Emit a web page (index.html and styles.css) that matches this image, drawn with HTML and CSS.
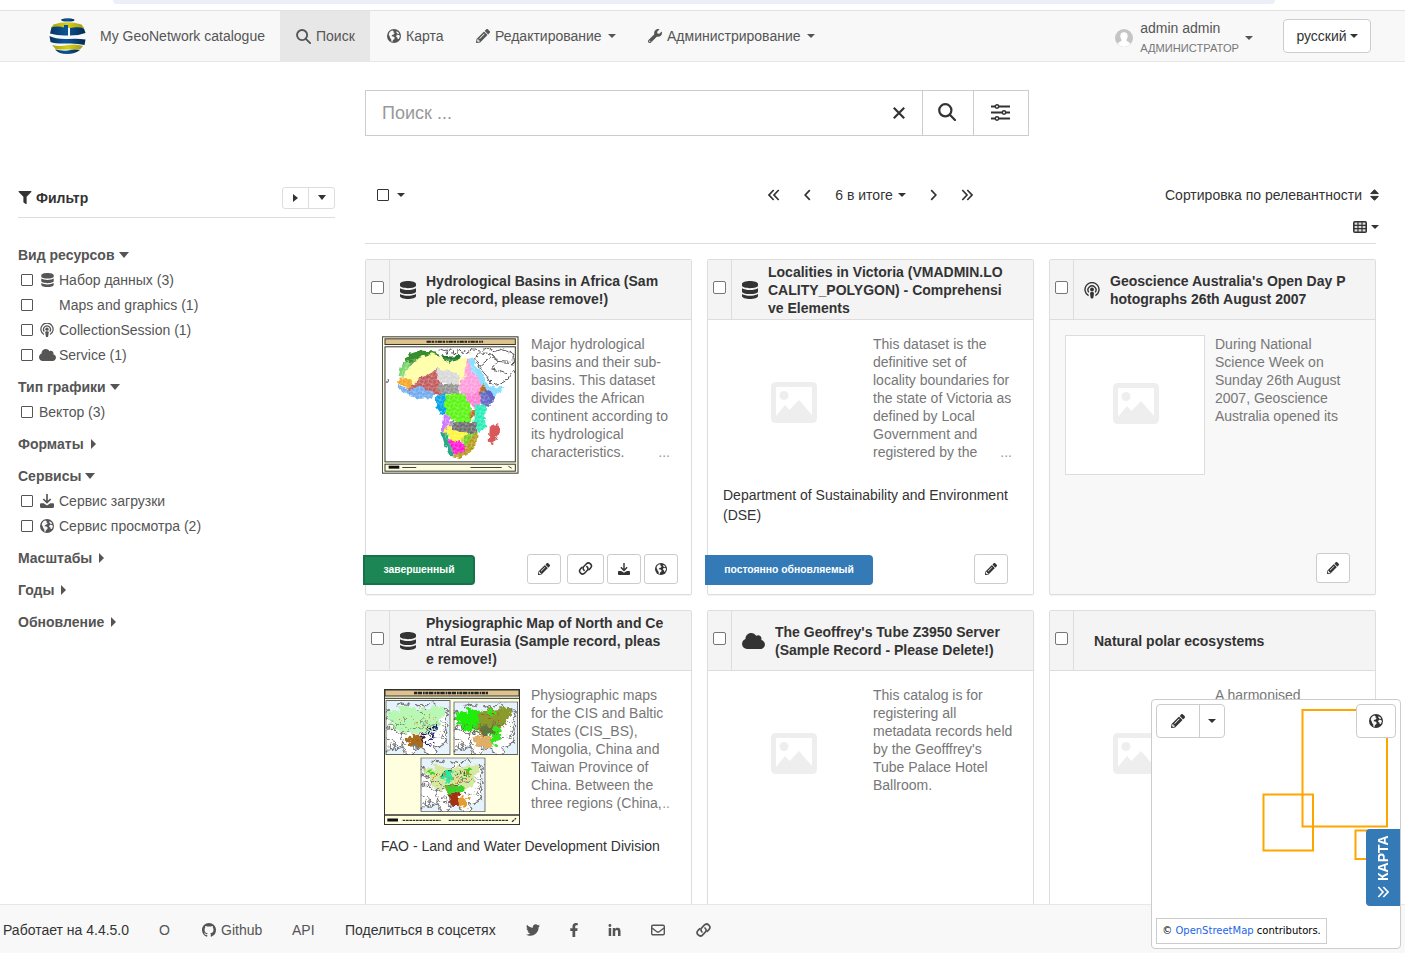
FILE: index.html
```html
<!DOCTYPE html>
<html lang="ru">
<head>
<meta charset="utf-8">
<title>My GeoNetwork catalogue</title>
<link rel="stylesheet" href="styles.css">
</head>
<body>
<svg class="sprite" aria-hidden="true">
  <symbol id="search" viewBox="0 0 16 16"><g fill="none" stroke="currentColor" stroke-width="2"><circle cx="6.5" cy="6.5" r="5.4"/><path d="M10.5 10.5l4.6 4.6" stroke-linecap="round"/></g></symbol>
  <symbol id="globe" viewBox="0 0 16 16"><circle cx="8" cy="8" r="8" fill="currentColor"/><path class="land" d="M2.600 4.400C3.400 3 4.800 2 6.300 1.700l1.300 1-.2 1.400 1.400.6-1.200 1.500-1.700.6-.7 1.400 2.200.4 1.500 1.500-.7 1.700-1.400.9-.7 2.200-1.100-.6-.2-2.700L3.600 10.200 3 8.400 2 6.600zM11 2.500l2 1.300.9 1.600-1.600.3-1-1-.8-.9zM11.300 6.600l2.900.2.500 2-1.300 2.500-1.200.2-.4-1.800-1.500-.9z"/></symbol>
  <symbol id="pencil" viewBox="0 0 512 512"><path fill="currentColor" fill-rule="evenodd" d="M497.900 142.100l-46.100 46.100c-4.700 4.700-12.300 4.700-17 0l-111-111c-4.700-4.700-4.700-12.300 0-17l46.100-46.100c18.700-18.700 49.100-18.700 67.900 0l60.100 60.100c18.800 18.700 18.800 49.100 0 67.900zM284.200 99.800L21.600 362.400.4 483.900c-2.900 16.400 11.400 30.600 27.800 27.800l121.500-21.300 262.600-262.600c4.700-4.700 4.700-12.300 0-17l-111-111c-4.800-4.700-12.400-4.700-17.100 0zM118 346l175-180 22 20-176 176zM88 424h48v36l-64 12-32-32 12-64h36z"/></symbol>
  <symbol id="wrench" viewBox="0 0 512 512"><path fill="currentColor" d="M507.730 109.100c-2.240-9.030-13.540-12.090-20.120-5.510l-74.360 74.360-67.880-11.310-11.310-67.880 74.360-74.360c6.620-6.620 3.430-17.900-5.660-20.160-47.380-11.740-99.550.91-136.580 37.930-39.640 39.640-50.550 97.100-34.050 147.200L18.740 402.760c-24.990 24.990-24.990 65.510 0 90.500 24.990 24.990 65.510 24.990 90.500 0l213.210-213.210c50.120 16.710 107.470 5.680 147.370-34.220 37.070-37.070 49.700-89.320 37.910-136.730zM64 472c-13.250 0-24-10.750-24-24 0-13.260 10.750-24 24-24s24 10.740 24 24c0 13.250-10.750 24-24 24z"/></symbol>
  <symbol id="filter" viewBox="0 0 512 512"><path fill="currentColor" d="M487.976 0H24.028C2.710 0-8.047 25.866 7.058 40.971L192 225.941V432c0 7.831 3.821 15.170 10.237 19.662l80 55.980C298.020 518.690 320 507.493 320 487.980V225.941l184.947-184.970C520.021 25.896 509.338 0 487.976 0z"/></symbol>
  <symbol id="cloud" viewBox="0 32 640 448"><path fill="currentColor" d="M537.600 226.600c4.100-10.700 6.400-22.400 6.400-34.600 0-53-43-96-96-96-19.700 0-38.100 6-53.300 16.200C367 64.200 315.300 32 256 32c-88.400 0-160 71.600-160 160 0 2.700.1 5.400.2 8.100C40.200 219.800 0 273.200 0 336c0 79.500 64.500 144 144 144h368c70.700 0 128-57.300 128-128 0-61.900-44-113.600-102.400-125.400z"/></symbol>
  <symbol id="database" viewBox="0 0 16 18"><path fill="currentColor" d="M0 3C0-.9 16-.9 16 3v1.500c0 3.500-16 3.500-16 0zM0 7.200c3.500 2.400 12.500 2.400 16 0v3.200c0 3.500-16 3.500-16 0zM0 13c3.500 2.400 12.500 2.400 16 0v2c0 3.900-16 3.900-16 0z"/></symbol>
  <symbol id="podcast" viewBox="0 0 16 16"><g fill="none" stroke="currentColor" stroke-width="1.400"><path d="M4.600 13.200a7 7 0 1 1 6.800 0"/><path d="M4.800 9.800a4 4 0 1 1 6.400 0"/></g><circle cx="8" cy="7" r="1.900" fill="currentColor"/><path fill="currentColor" d="M6 10.500c0-1.500 4-1.500 4 0l-.6 4.500c-.2 1.300-2.600 1.300-2.800 0z"/></symbol>
  <symbol id="download" viewBox="0 0 16 16"><path fill="none" stroke="currentColor" stroke-width="1.900" d="M8 0v9.500M3.800 5.700L8 9.900l4.200-4.200"/><path fill="currentColor" d="M1.200 10.500h3L8 13l3.800-2.500h3q1.200 0 1.200 1.200v3q0 1.300-1.200 1.300H1.200Q0 16 0 14.700v-3q0-1.200 1.200-1.200z"/></symbol>
  <symbol id="link" viewBox="0 0 18 16"><g fill="none" stroke="currentColor" stroke-width="1.900" stroke-linecap="round"><path d="M7.300 10.300C5.600 8.600 5.800 6.700 7 5.500l2.900-3a3.600 3.600 0 0 1 5.300 5l-2 2"/><path d="M10.700 5.700c1.700 1.700 1.500 3.600.3 4.800l-2.900 3a3.600 3.600 0 0 1-5.300-5l2-2"/></g></symbol>
  <symbol id="image" viewBox="0 0 46 41"><path fill="currentColor" fill-rule="evenodd" d="M5 0h36q5 0 5 5v31q0 5-5 5H5q-5 0-5-5V5q0-5 5-5zM5.500 5q-.5 0-.5.500V34l9-11 4.500 5L28 18l13 15V5.500q0-.5-.5-.5z"/><circle cx="13" cy="13.500" r="4.500" fill="currentColor"/></symbol>
  <symbol id="twitter" viewBox="0 0 512 512"><path fill="currentColor" d="M459.370 151.716c.325 4.548.325 9.097.325 13.645 0 138.720-105.583 298.558-298.558 298.558-59.452 0-114.680-17.219-161.137-47.106 8.447.974 16.568 1.299 25.340 1.299 49.055 0 94.213-16.568 130.274-44.832-46.132-.975-84.792-31.188-98.112-72.772 6.498.974 12.995 1.624 19.818 1.624 9.421 0 18.843-1.300 27.614-3.573-48.081-9.747-84.143-51.980-84.143-102.985v-1.299c13.969 7.797 30.214 12.670 47.431 13.319-28.264-18.843-46.781-51.005-46.781-87.391 0-19.492 5.197-37.360 14.294-52.954 51.655 63.675 129.300 105.258 216.365 109.807-1.624-7.797-2.599-15.918-2.599-24.040 0-57.828 46.782-104.934 104.934-104.934 30.213 0 57.502 12.670 76.670 33.137 23.715-4.548 46.456-13.320 66.599-25.340-7.798 24.366-24.366 44.833-46.132 57.827 21.117-2.273 41.584-8.122 60.426-16.243-14.292 20.791-32.161 39.308-52.628 54.253z"/></symbol>
  <symbol id="facebook" viewBox="0 0 320 512"><path fill="currentColor" d="M279.140 288l14.220-92.660h-88.910v-60.130c0-25.350 12.420-50.060 52.240-50.060h40.420V6.260S260.430 0 225.360 0c-73.220 0-121.080 44.380-121.080 124.720v70.620H22.890V288h81.390v224h100.170V288z"/></symbol>
  <symbol id="linkedin" viewBox="0 0 448 448"><path fill="currentColor" d="M100.280 448H7.400V148.900h92.880zM53.790 108.100C24.090 108.100 0 83.500 0 53.800a53.790 53.790 0 0 1 107.580 0c0 29.700-24.100 54.300-53.790 54.300zM447.900 448h-92.680V302.400c0-34.700-.7-79.200-48.290-79.200-48.290 0-55.690 37.700-55.690 76.700V448h-92.780V148.900h89.080v40.800h1.300c12.400-23.500 42.690-48.300 87.880-48.300 94 0 111.280 61.900 111.280 142.300V448z"/></symbol>
  <symbol id="github" viewBox="0 0 16 16"><path fill="currentColor" d="M8 0C3.580 0 0 3.580 0 8c0 3.540 2.290 6.530 5.470 7.590.4.070.55-.17.55-.38 0-.19-.01-.82-.01-1.490-2.010.37-2.530-.49-2.690-.94-.09-.23-.48-.94-.82-1.130-.28-.15-.68-.52-.01-.53.63-.01 1.080.58 1.230.82.72 1.210 1.870.87 2.330.66.070-.52.280-.87.510-1.070-1.780-.2-3.640-.89-3.640-3.950 0-.87.31-1.590.82-2.150-.08-.2-.36-1.020.08-2.120 0 0 .67-.21 2.200.82.640-.18 1.320-.27 2-.27s1.360.09 2 .27c1.530-1.040 2.200-.82 2.200-.82.440 1.100.16 1.920.08 2.120.51.560.82 1.270.82 2.150 0 3.070-1.870 3.750-3.650 3.950.29.250.54.730.54 1.480 0 1.070-.01 1.930-.01 2.200 0 .21.15.46.55.38A8.010 8.010 0 0 0 16 8c0-4.420-3.580-8-8-8z"/></symbol>
  <symbol id="mail" viewBox="0 0 14 12"><g fill="none" stroke="currentColor" stroke-width="1.400"><rect x=".7" y="1.200" width="12.600" height="9.600" rx="1.200"/><path d="M1 4l4.800 3.700q1.200.8 2.400 0L13 4"/></g></symbol>
  <symbol id="angles" viewBox="0 0 12 12"><path fill="none" stroke="currentColor" stroke-width="1.700" d="M1.300 1L6 6l-4.700 5M6.300 1L11 6l-4.700 5"/></symbol>
  <symbol id="angle" viewBox="0 0 7 12"><path fill="none" stroke="currentColor" stroke-width="1.700" d="M1.200 1.200L5.800 6l-4.600 4.800"/></symbol>
  <symbol id="sliders" viewBox="0 0 19 17"><path fill="none" stroke="currentColor" stroke-width="2" d="M0 2.500h19M0 8.500h19M0 14.500h19"/><g class="knob" stroke="currentColor" stroke-width="1.500"><circle cx="6" cy="2.500" r="1.700"/><circle cx="13" cy="8.500" r="1.700"/><circle cx="6" cy="14.500" r="1.700"/></g></symbol>
  <symbol id="times" viewBox="0 0 12 12"><path fill="none" stroke="currentColor" stroke-width="2.200" d="M.8.8l10.400 10.400M11.200.8L.8 11.200"/></symbol>
  <symbol id="table" viewBox="0 0 14 12"><rect x=".8" y=".8" width="12.400" height="10.400" rx="1" fill="#ddd" stroke="currentColor" stroke-width="1.600"/><path fill="none" stroke="currentColor" stroke-width="1.200" d="M1 4.300h12M1 7.700h12M5 1v10M9 1v10"/></symbol>
  <symbol id="sort" viewBox="0 0 9 12"><path fill="currentColor" stroke="currentColor" stroke-linejoin="round" d="M4.500.7L8.300 4.600H.7zM4.500 11.300L8.300 7.400H.7z"/></symbol>
</svg>

<div class="browser-edge"><div class="browser-bar"></div></div>
<nav class="navbar">
  <a class="brand">
    <svg class="logo" viewBox="0 0 37 36">
      <defs><linearGradient id="blue"><stop offset="0" stop-color="#08355f"/><stop offset=".45" stop-color="#0b5596"/><stop offset="1" stop-color="#062a50"/></linearGradient><linearGradient id="gold"><stop offset="0" stop-color="#a8a01a"/><stop offset=".5" stop-color="#d8cf16"/><stop offset="1" stop-color="#a39a20"/></linearGradient></defs>
      <path fill="url(#blue)" d="M12 1.500Q18.500-1 25.500 1.500L25 3Q18.500 4 13 3z"/>
      <path fill="url(#gold)" d="M4.500 6.500Q18 2 32.500 6.500L35 10H2z"/>
      <path fill="url(#blue)" d="M2.500 9.500Q8 7.500 15 9.500V7h4v10.500Q9 18 1 15.500zM21 10q8-1.500 14 .5l1.500 4.500q-7 2.500-15.500 2.500z"/>
      <path fill="url(#blue)" d="M.5 18Q7 21.500 19 21q10-.7 17.500.5l-1 5.500q-8-2-17.500-1.500Q7 26 1.500 24z"/>
      <path fill="url(#gold)" d="M3 27q8 2 16 0 9-1.500 15 1l-3 3.500H7z"/>
      <path fill="url(#blue)" d="M6 31.500q6 1.500 13 1 6-1.500 12-.5Q26 36 18 36 10 36 6 31.500z"/>
    </svg>
    <span>My GeoNetwork catalogue</span>
  </a>
  <a class="nav-item active"><svg class="i15"><use href="#search"/></svg>Поиск</a>
  <a class="nav-item map-item"><svg class="i14"><use href="#globe"/></svg>Карта</a>
  <a class="nav-item edit-item"><svg class="i14"><use href="#pencil"/></svg>Редактирование<i class="caret"></i></a>
  <a class="nav-item admin-item"><svg class="i14"><use href="#wrench"/></svg>Администрирование<i class="caret"></i></a>
  <div class="user">
    <svg class="avatar" viewBox="0 0 18 18"><circle cx="9" cy="9" r="9" fill="#c5c5c5"/><path fill="#fff" d="M9 3.200c-3 0-4 2.200-3.600 4.800.3 1.600 1 2.300 1.200 3.200-.3 1.600-3.200 1.300-4 3.800A9 9 0 0 0 9 18a9 9 0 0 0 6.400-3c-.8-2.500-3.700-2.200-4-3.800.2-.9.900-1.600 1.200-3.200C13 5.400 12 3.200 9 3.200z"/></svg>
    <div class="user-text"><div>admin admin</div><div class="role">АДМИНИСТРАТОР</div></div>
    <i class="caret"></i>
  </div>
  <button class="btn lang">русский<i class="caret"></i></button>
</nav>

<main>
  <form class="search">
    <div class="search-text">Поиск ...</div>
    <div class="clear"><svg><use href="#times"/></svg></div>
    <div class="search-go"><svg><use href="#search"/></svg></div>
    <div class="search-adv"><svg><use href="#sliders"/></svg></div>
  </form>
  <div class="content">
    <aside>
      <div class="filter-head">
        <svg class="i14"><use href="#filter"/></svg><b>Фильтр</b>
        <div class="toggle"><span><i class="tri right"></i></span><span><i class="tri down"></i></span></div>
      </div>
      <div class="facet"><h4>Вид ресурсов<i class="tri down"></i></h4>
        <label><i class="box"></i><span class="ic"><svg class="db"><use href="#database"/></svg></span>Набор данных (3)</label>
        <label><i class="box"></i><span class="ic"></span>Maps and graphics (1)</label>
        <label><i class="box"></i><span class="ic"><svg class="i14"><use href="#podcast"/></svg></span>CollectionSession (1)</label>
        <label><i class="box"></i><span class="ic"><svg class="cl"><use href="#cloud"/></svg></span>Service (1)</label>
      </div>
      <div class="facet"><h4>Тип графики<i class="tri down"></i></h4>
        <label><i class="box"></i>Вектор (3)</label></div>
      <div class="facet"><h4>Форматы<i class="tri right"></i></h4></div>
      <div class="facet"><h4>Сервисы<i class="tri down"></i></h4>
        <label><i class="box"></i><span class="ic"><svg class="i14"><use href="#download"/></svg></span>Сервис загрузки</label>
        <label><i class="box"></i><span class="ic"><svg class="i14"><use href="#globe"/></svg></span>Сервис просмотра (2)</label>
      </div>
      <div class="facet"><h4>Масштабы<i class="tri right"></i></h4></div>
      <div class="facet"><h4>Годы<i class="tri right"></i></h4></div>
      <div class="facet"><h4>Обновление<i class="tri right"></i></h4></div>
    </aside>

    <section class="results">
      <div class="toolbar">
        <div class="select"><i class="box"></i><i class="caret"></i></div>
        <div class="pager">
          <svg class="dbl flip"><use href="#angles"/></svg><svg class="sgl flip"><use href="#angle"/></svg>
          <span>6 в итоге<i class="caret"></i></span>
          <svg class="sgl"><use href="#angle"/></svg><svg class="dbl"><use href="#angles"/></svg>
        </div>
        <div class="sorting">
          <div>Сортировка по релевантности<svg class="sort"><use href="#sort"/></svg></div>
          <div class="view"><svg><use href="#table"/></svg><i class="caret"></i></div>
        </div>
      </div>

      <div class="grid">
        <article class="card">
          <header><span class="check"><i></i></span><svg class="type"><use href="#database"/></svg><h3>Hydrological Basins in Africa (Sam<br>ple record, please remove!)</h3></header>
          <div class="body">
            <div class="thumb">
              <svg class="africa" viewBox="24 20 412 412">
                <defs>
                  <pattern id="cells" width="26" height="24" patternUnits="userSpaceOnUse"><path d="M0 7l9-5 8 6 9-4M9 2l-3 12 11 5 5-10M6 14L0 19M17 19l-2 5M17 19l9 3" fill="none" stroke="#fff" stroke-opacity=".5" stroke-width="2"/></pattern>
                  <filter id="rough" x="-5%" y="-5%" width="110%" height="110%" color-interpolation-filters="sRGB"><feTurbulence type="fractalNoise" baseFrequency=".06" numOctaves="2" seed="3"/><feDisplacementMap in="SourceGraphic" scale="18" xChannelSelector="R" yChannelSelector="G"/></filter>
                </defs>
                <rect x="25" y="21" width="408" height="410" fill="#ffffdf" stroke="#333" stroke-width="3"/>
                <rect x="33" y="27" width="392" height="17" fill="#dfc38f" stroke="#333" stroke-width="3"/>
                <path d="M158 36h170" stroke="#222" stroke-width="6" stroke-dasharray="13 2 8 3 5 2"/>
                <rect x="33" y="51" width="392" height="346" fill="#fff" stroke="#333" stroke-width="3"/>
                <g filter="url(#rough)">
                  <g fill="none" stroke="#555" stroke-width="3"><path d="M196 57q10 8 22 4l4 10 8-11M240 57l-6 12 15 4 6-14 12 9 8-8M276 72l18-12 28 4 18-8 20 10 22-8 34 12M300 90l18-22 34 5 24 22 34 3M306 88l14 30 20 22 15 26 20-5 25-12 17-30 10 12M318 110l35-30 20 14-17 22 44 16M410 60l8 20 2 30M36 150l8 2-2 8-6 2"/></g>
                  <path fill="#388e2e" d="M76 138l6-30 22-35 32-11 50 3 12 14-52 12-46 22-8 22z"/>
                  <path fill="#7bd86e" d="M74 142l8-36 20-20 8 16-18 42z"/>
                  <path fill="#ffffa2" d="M94 128l32-38 48-20 26 10 34 18 20-16 28 8 6 35-22 41-30 0-22-31-31-9-33 16-24 24-29 4z"/>
                  <path fill="#257b2b" d="M202 76l30 4 30-2-5 10-18 2-12 9-18-8z"/>
                  <path fill="#ff9bdc" d="M258 160l17-26 4-48 16 12 16 30 22 28-4 30-18 10-10 18-18-10-24-20z"/>
                  <path fill="#8edfff" d="M286 86l12-3 8 28 16 15 26 48 26-2 22 0-24 20-18 18-20-29-23-38-22-24z"/>
                  <path fill="#c0585a" d="M98 180l34-30 40-20 17-15 4 36 28 28-4 16-40-2-38-13-20 9z"/>
                  <path fill="#f6a31d" d="M76 147l31-2 8 16-11 16-28-15z"/>
                  <path fill="#6da9ef" d="M73 164l38 17 24-14 46 24-8 14-40 3-38-15-20-14z"/>
                  <path fill="#d7d7d7" d="M184 116l32 4 38 14 2 32-32-3-32-10z"/>
                  <path fill="#919191" d="M196 164l28-2 34 2-2 30-36-4-20 10z"/>
                  <path fill="#00a2e8" d="M186 195l29-5 4 58-14 9-18-25z"/>
                  <path fill="#56f50c" d="M214 195l49-7 27 22-2 28 10 25-10 18-36-2-38-19z"/>
                  <path fill="#ff7cd2" d="M272 188l26 3 18-10 8 37-19 21-20-21z"/>
                  <path fill="#b66b20" d="M290 237l21 3-4 18-16 9zM328 160l16 28-15 18-16-10z"/>
                  <path fill="#6265c4" d="M318 193l26-15 18 27-12 24-28-5z"/>
                  <path fill="#21edb5" d="M304 230l34-7-4 42 2 28-20 17-14-30z"/>
                  <path fill="#ce77ff" d="M207 256l17-2 10 36-20 21-10-8z"/>
                  <path fill="#6a6a6a" d="M232 275l76-1 3 36-30 2-46-7z"/>
                  <path fill="#fcf637" d="M222 283l16 22 46 4-7 26-42 3-21-32z"/>
                  <path fill="#71cc1d" d="M266 320l43-14-5 31-38 9z"/>
                  <path fill="#ff12d2" d="M219 326l52 15 15 9-23 26-26-4z"/>
                  <path fill="#27a782" d="M202 306l16 3 21 72-8-2-20-38z"/>
                  <path fill="#b39a15" d="M240 373l28-4 20-44 24-20-4 40-17 26-33 14-20-4z"/>
                  <path fill="#d9595b" d="M348 295l25-15 5 15-17 49-16-8z"/>
                </g>
                <path fill="url(#cells)" d="M76 140l28-50 50-12 124 15 26 24 17 50 29 40-12 40-4 55-18 42-34 36-40 5-30-65 2-70-20-25-10-20-75 5-40-35z"/>
                <rect x="33" y="404" width="392" height="21" fill="#ffffdf" stroke="#333" stroke-width="3"/><path d="M44 413h32" stroke="#111" stroke-width="9"/><path d="M85 414h42M290 414h94M404 410l10 6" stroke="#444" stroke-width="3"/>
              </svg>
            </div>
            <p>Major hydrological<br>basins and their sub-<br>basins. This dataset<br>divides the African<br>continent according to<br>its hydrological<br><span class="last">characteristics.<em>...</em></span></p>
          </div>
          <div class="org"></div>
          <footer><span class="status done">завершенный</span><span class="acts"><button class="btn"><svg><use href="#pencil"/></svg></button><button class="btn linkbtn"><svg><use href="#link"/></svg></button><button class="btn"><svg><use href="#download"/></svg></button><button class="btn"><svg><use href="#globe"/></svg></button></span></footer>
        </article>
        <article class="card">
          <header><span class="check"><i></i></span><svg class="type"><use href="#database"/></svg><h3>Localities in Victoria (VMADMIN.LO<br>CALITY_POLYGON) - Comprehensi<br>ve Elements</h3></header>
          <div class="body"><div class="thumb empty"><svg><use href="#image"/></svg></div>
            <p>This dataset is the<br>definitive set of<br>locality boundaries for<br>the state of Victoria as<br>defined by Local<br>Government and<br><span class="last">registered by the<em>...</em></span></p></div>
          <div class="org">Department of Sustainability and Environment<br>(DSE)</div>
          <footer><span class="status ongoing">постоянно обновляемый</span><span class="acts solo"><button class="btn"><svg><use href="#pencil"/></svg></button></span></footer>
        </article>
        <article class="card shaded">
          <header><span class="check"><i></i></span><svg class="type pod"><use href="#podcast"/></svg><h3>Geoscience Australia's Open Day P<br>hotographs 26th August 2007</h3></header>
          <div class="body"><div class="thumb empty framed"><svg><use href="#image"/></svg></div>
            <p>During National<br>Science Week on<br>Sunday 26th August<br>2007, Geoscience<br>Australia opened its</p></div>
          <div class="org"></div>
          <footer><span class="acts solo"><button class="btn"><svg><use href="#pencil"/></svg></button></span></footer>
        </article>
        <article class="card">
          <header><span class="check"><i></i></span><svg class="type"><use href="#database"/></svg><h3>Physiographic Map of North and Ce<br>ntral Eurasia (Sample record, pleas<br>e remove!)</h3></header>
          <div class="body">
            <div class="thumb">
              <svg class="eurasia" viewBox="26 26 408 408">
                <defs>
                  <filter id="ragged" x="-5%" y="-5%" width="110%" height="110%" color-interpolation-filters="sRGB"><feTurbulence type="fractalNoise" baseFrequency=".06" numOctaves="2" seed="8"/><feDisplacementMap in="SourceGraphic" scale="36" xChannelSelector="R" yChannelSelector="G"/></filter>
                  <clipPath id="panel"><rect width="194" height="164"/></clipPath>
                  <g id="coast"><rect width="194" height="164" fill="#e6f3fc"/><g fill="#fff" stroke="#777" stroke-width="4" filter="url(#ragged)"><path d="M-5 60l30-20 20 10 10-20 30 6 20-20 30 15 40-5 12 45-6 40-12 25-20 10-12 30-18-26-25-8-25 35-20-45-30 5-20 20-24-8z"/><path d="M-5 90l30-4 20 14 20-6 24 12 30-10 20 14 22-8M0 110l20 10 12 30 26-10M50 94l-6 26 20 22M88 106l-4 26 20 12M120 10l22-6 10 12M172 60l8 30-12 20M30 20l20-12 22 8M172 130l8-12 8 8M0 30l16 8-6 20 20 4M10 130l14 20M66 120l12 20 30-4M150 30l24-8 16 14M110 20l-20-8" fill="none"/></g></g>
                </defs>
                <rect x="27.500" y="27.500" width="405" height="405" fill="#ffffdf" stroke="#333" stroke-width="3"/>
                <rect x="29" y="29" width="402" height="18" fill="#dfc38f" stroke="#333" stroke-width="3"/><path d="M116 38h222" stroke="#222" stroke-width="7" stroke-dasharray="9 2 13 3 5 2"/>
                <path d="M27 54h405" stroke="#333" stroke-width="3"/>
                <g transform="translate(31 60)" clip-path="url(#panel)"><use href="#coast"/><g filter="url(#ragged)"><path fill="#b8f7b4" d="M4 36l34-10 22-12 30 14 40-6 50-6-10 40-14 24-20 20-26-6-30 6-34-8-30-16z"/><path fill="#a96b1c" d="M60 112l38-12 18 16-10 22-38-2z"/><path fill="none" stroke="#1b1470" stroke-width="8" stroke-dasharray="6 7" d="M106 118l20-30 20-6-8 30-16 22 22 4"/><path fill="none" stroke="#df8a32" stroke-width="4" stroke-dasharray="4 11" d="M40 58l30-12 34 32 22-30 30 6-20 26-40 22-30-4"/><path fill="none" stroke="#7b8b6b" stroke-width="3" d="M12 80l30-6 24 14 34-6 22-14 30 4M60 46l-8 32M114 40l-8 40"/></g><path fill="none" stroke="#333" stroke-width="4" d="M0 0h194v164H0z"/></g>
                <g transform="translate(235 64) scale(.995 .97)" clip-path="url(#panel)"><use href="#coast"/><g filter="url(#ragged)"><path fill="#1fed0b" d="M8 36l42-14 30 8 12 36-18 26-36-3-28-20z"/><path fill="#8a9a2d" d="M84 26l34-4 54-4-8 40-24 30-50 16-24-22z"/><path fill="#5b7a3a" d="M74 70l50 2 10 24-38 10z"/><path fill="#e0af66" d="M56 108l40-6 26 20-10 24-40-4z"/><path fill="#35e81a" d="M118 76l26 2-6 40-18 26-8-28z"/><path fill="#35e81a" d="M100 30l26-6 6 16-20 8z"/><path fill="none" stroke="#c1352a" stroke-width="4" stroke-dasharray="4 10" d="M90 46l50-6-20 30-40 10 20 30 20-10"/><path fill="none" stroke="#6b6b5b" stroke-width="3" d="M12 80l30-6 24 14 34-6 22-14 30 4M60 96l48 8 24-10"/></g><path fill="none" stroke="#333" stroke-width="4" d="M0 0h194v164H0z"/></g>
                <g transform="translate(136 232) scale(1 .99)" clip-path="url(#panel)"><use href="#coast"/><g filter="url(#ragged)"><path fill="#d5e9a1" d="M8 36l48-14 30 14 40-10 50-6-16 56-30 28-52-4-44-14z"/><path fill="#2ee6a4" d="M60 48l34-8 8 26-30 8z"/><path fill="#38d42d" d="M68 92l28-16 30 14-12 26-30 4zM128 36l30-6-12 28zM18 42l20-4-2 16z"/><path fill="#a33114" d="M84 110l26-4 14 22-14 22-18-10z"/><path fill="#e79c33" d="M110 118l32 4-8 28-22-4z"/><path fill="none" stroke="#e77817" stroke-width="5" stroke-dasharray="5 8" d="M34 60l30-10 40 20 24-30 24 10-24 24-60 24"/><path fill="none" stroke="#23672a" stroke-width="5" stroke-dasharray="5 9" d="M46 50l50-6 44 8-24 24-50 10"/><path fill="none" stroke="#777" stroke-width="3" d="M12 80l30-6 24 14 34-6 22-14 30 4"/></g><path fill="none" stroke="#333" stroke-width="4" d="M0 0h194v164H0z"/></g>
                <path d="M27 404h405" stroke="#333" stroke-width="5"/><path d="M36 419h32" stroke="#111" stroke-width="9"/><path d="M82 420h114M220 420h180M410 424l12-10" stroke="#333" stroke-width="4" stroke-dasharray="8 2"/>
              </svg>
            </div>
            <p>Physiographic maps<br>for the CIS and Baltic<br>States (CIS_BS),<br>Mongolia, China and<br>Taiwan Province of<br>China. Between the<br><span class="last">three regions (China,<em>..</em></span></p>
          </div>
          <div class="org">FAO - Land and Water Development Division</div>
        </article>
        <article class="card">
          <header><span class="check"><i></i></span><svg class="type cloudy"><use href="#cloud"/></svg><h3>The Geoffrey's Tube Z3950 Server<br>(Sample Record - Please Delete!)</h3></header>
          <div class="body"><div class="thumb empty"><svg><use href="#image"/></svg></div>
            <p>This catalog is for<br>registering all<br>metadata records held<br>by the Geofffrey's<br>Tube Palace Hotel<br>Ballroom.</p></div>
        </article>
        <article class="card">
          <header><span class="check"><i></i></span><h3 class="plain">Natural polar ecosystems</h3></header>
          <div class="body"><div class="thumb empty"><svg><use href="#image"/></svg></div><p>A harmonised</p></div>
        </article>
      </div>
    </section>
  </div>
</main>

<footer class="page-footer">
  <span class="dark version">Работает на 4.4.5.0</span><a class="about">О</a><a class="gh"><svg class="i14"><use href="#github"/></svg>Github</a><a class="api">API</a><span class="dark share">Поделиться в соцсетях</span>
  <svg class="tw"><use href="#twitter"/></svg><svg class="fb"><use href="#facebook"/></svg><svg class="li"><use href="#linkedin"/></svg><svg class="ml"><use href="#mail"/></svg><svg class="lk"><use href="#link"/></svg>
</footer>

<div class="minimap">
  <svg class="extents" viewBox="0 0 248 248"><g fill="none" stroke="#ffa500" stroke-width="2"><path d="M150.500 10H235v116.500h-84.500zM111.500 94.500H161v56h-49.500zM203.500 130.500H236V159h-32.500z"/></g></svg>
  <div class="draw"><span><svg><use href="#pencil"/></svg></span><span><i class="caret"></i></span></div>
  <button class="btn go-map"><svg><use href="#globe"/></svg></button>
  <div class="tab"><svg><use href="#angles"/></svg>КАРТА</div>
  <div class="credit">© <a>OpenStreetMap</a> contributors.</div>
</div>
</body>
</html>
```
FILE: styles.css
```css
* { box-sizing: border-box; }
body { margin: 0; height: 953px; overflow: hidden; display: flex; flex-direction: column; background: #fff; color: #333; font: 14px/20px "Liberation Sans", Arial, sans-serif; position: relative; }
svg { display: block; flex: none; }
.sprite { position: absolute; width: 0; height: 0; }
.land { fill: #f8f8f8; }
.knob { fill: #fff; }
.i14 { width: 14px; height: 14px; }
.i15 { width: 15px; height: 15px; }
.caret { display: inline-block; flex: none; border: 4px solid transparent; border-top-color: currentColor; border-bottom: 0; }
.tri { display: inline-block; width: 0; height: 0; flex: none; }
.tri.down { border: 5px solid transparent; border-top: 6px solid currentColor; border-bottom: 0; }
.tri.right { border: 5px solid transparent; border-left: 5px solid currentColor; border-right: 0; }
.box { width: 12px; height: 12px; border: 1.500px solid #555; border-radius: 1px; flex: none; }
.btn { display: flex; align-items: center; justify-content: center; padding: 0; border: 1px solid #ccc; border-radius: 4px; background: #fff; color: #333; font: inherit; }

.browser-edge { height: 10px; padding: 0 130px 0 113px; flex: none; }
.browser-bar { height: 4px; background: #eceff7; border-radius: 0 0 14px 14px; }
.navbar { height: 52px; flex: none; display: flex; align-items: center; background: #f8f8f8; border-top: 1px solid #e2e2e2; border-bottom: 1px solid #e7e7e7; color: #555; }
.brand { display: flex; align-items: center; gap: 14px; width: 280px; padding-left: 49px; }
.logo { width: 37px; height: 36px; }
.nav-item { display: flex; align-items: center; gap: 5px; height: 50px; padding: 0 15px 0 16px; }
.active { width: 90px; background: #e7e7e7; }
.map-item { width: 90px; padding-left: 17px; }
.edit-item .caret { margin-left: 1px; }
.edit-item { width: 172px; }
.admin-item .caret { margin-left: 1px; }
.user { margin-left: auto; display: flex; align-items: center; padding-top: 3px; }
.avatar { width: 18px; height: 18px; }
.user-text { margin: 0 6px 0 7px; line-height: 20px; }
.role { font-size: 11.150px; color: #777; }
.lang { width: 88px; height: 34px; margin: 0 34px 0 30px; gap: 3px; }

main { flex: 1; min-height: 0; overflow: hidden; padding: 28px 29px 0 18px; }
.search { display: flex; width: 664px; height: 46px; margin-left: 347px; border: 1px solid #ccc; }
.search > div { display: flex; align-items: center; justify-content: center; }
.search .search-text { flex: 1; justify-content: flex-start; padding-left: 16px; color: #999; font-size: 18px; }
.search .clear { width: 47px; padding-bottom: 1px; }
.clear svg { width: 12px; height: 12px; }
.search .search-go { width: 51px; border-left: 1px solid #ccc; padding: 0 2px 2px 0; }
.search-go svg { width: 18px; height: 18px; }
.search .search-adv { width: 55px; border-left: 1px solid #ccc; padding: 0 1px 2px 0; }
.search-adv svg { width: 19px; height: 17px; }
.content { display: flex; gap: 30px; padding-top: 47px; }
aside { width: 317px; flex: none; color: #555; }
.filter-head { display: flex; align-items: center; height: 35px; padding-bottom: 5px; border-bottom: 1px solid #ddd; margin-bottom: 24px; gap: 4px; color: #333; }
.filter-head > svg { height: 13px; }
.toggle { display: flex; margin-left: auto; width: 53px; height: 22px; border: 1px solid #ddd; border-radius: 3px; }
.toggle span { flex: 1; display: flex; align-items: center; justify-content: center; }
.toggle span + span { border-left: 1px solid #ddd; }
.toggle .down { border-width: 5px 4px 0; }
.toggle .right { border-width: 4px 0 4px 5px; }
.facet { margin-bottom: 7px; }
.facet h4, .facet label { display: flex; align-items: center; height: 25px; margin: 0; font-size: 14px; }
.facet h4 { gap: 4px; }
.facet h4 .right { margin-left: 3px; }
.facet .box { margin: 0 6px 0 3px; }
.ic { width: 20px; display: flex; justify-content: center; padding-right: 4px; }
.db { width: 13px; height: 14px; }
.cl { width: 17px; height: 12px; }

.results { width: 1011px; }
.toolbar { display: grid; grid-template-columns: 350px 1fr 350px; height: 61px; border-bottom: 1px solid #ddd; }
.toolbar > div { height: 24px; display: flex; align-items: center; }
.select { padding-left: 12px; gap: 8px; }
.select .box { border-color: #333; }
.toolbar .pager { justify-content: center; gap: 24px; }
.pager span .caret { margin: 0 0 3px 5px; }
.dbl { width: 12px; height: 12px; }
.sgl { width: 7px; height: 12px; }
.flip { transform: scaleX(-1); }
.toolbar .sorting { display: block; text-align: right; margin-right: -4px; }
.sorting > div { display: flex; align-items: center; justify-content: flex-end; height: 24px; }
.sort { width: 9px; height: 12px; margin-left: 8px; }
.sorting > div:first-child { padding-right: 1px; }
.sorting .view { gap: 4px; height: 40px; padding-right: 1px; }
.view svg { width: 14px; height: 12px; }
.grid { display: grid; grid-template-columns: repeat(3, 327px); gap: 15px; padding-top: 15px; }
.card { height: 336px; border: 1px solid #ddd; border-radius: 2px; background: #fff; box-shadow: 0 1px 1px rgba(0,0,0,.05); display: flex; flex-direction: column; }
.shaded { background: #f8f8f8; }
.card header { display: flex; align-items: center; height: 60px; flex: none; background: #f4f4f4; border-bottom: 1px solid #ddd; }
.check { width: 24px; height: 59px; border-right: 1px solid #ddd; padding: 21px 0 0 5px; }
.check i { display: block; width: 13px; height: 13px; border: 1px solid #767676; border-radius: 2px; background: #fff; }
.type { width: 16px; height: 18px; margin: 1px 10px 0; }
.type.pod { height: 17px; }
.type.cloudy { width: 23px; height: 16px; margin-right: 10px; }
.card h3 { margin: 0; font-size: 14px; line-height: 18px; white-space: nowrap; }
.card h3.plain { margin-left: 20px; }
.body { display: flex; gap: 10px; height: 156px; padding: 15px 0 0 15px; flex: none; color: #777; }
.thumb { width: 140px; height: 140px; flex: none; }
.africa { width: 137px; height: 138px; margin: 1px 0 0 1px; }
.eurasia { width: 136px; height: 136px; margin: 3px 0 0 3px; }
.empty { display: flex; align-items: center; justify-content: center; color: #eee; padding: 0 0 5px 2px; }
.empty svg { width: 46px; height: 41px; }
.framed { border: 1px solid #ddd; background: #fff; padding-bottom: 4px; }
.body p { margin: 0; line-height: 18px; width: 139px; white-space: nowrap; }
.last { display: flex; justify-content: space-between; }
.last em { font-style: normal; color: #999; }
.org { padding: 9px 15px 0; height: 77px; white-space: nowrap; flex: none; }
.card footer { display: flex; align-items: center; }
.status { height: 30px; width: 112px; margin: 2px 0 0 -3px; border: 2px solid #167345; border-radius: 0 4px 4px 0; background: #1c8755; color: #fff; font-size: 10.350px; line-height: 26px; font-weight: bold; text-align: center; }
.status.ongoing { width: 168px; background: #337ab7; border-color: #337ab7; }
.acts { display: flex; gap: 3px; margin-left: auto; padding-right: 13px; }
.acts.solo { padding-right: 25px; }
.acts .btn { width: 34px; height: 30px; border-radius: 3px; padding-bottom: 1px; }
.acts .btn svg { width: 12px; height: 12px; }
.acts .linkbtn { width: 37px; margin-left: 3px; }
.acts .linkbtn svg { width: 15px; height: 13px; }

.page-footer { height: 49px; flex: none; display: flex; align-items: center; background: #f8f8f8; border-top: 1px solid #e7e7e7; color: #555; padding: 2px 0 0 3px; white-space: nowrap; }
.dark { color: #333; }
.version { width: 156px; }
.about { width: 43px; }
.gh { display: flex; align-items: center; gap: 5px; width: 90px; }
.api { width: 53px; }
.share { width: 181px; }
.tw { width: 14px; height: 14px; margin-right: 29px; }
.fb { width: 10px; height: 14px; margin-right: 29px; }
.li { width: 13px; height: 12px; margin-right: 30px; }
.ml { width: 14px; height: 12px; margin-right: 30px; }
.lk { width: 17px; height: 14px; }

.minimap { position: absolute; left: 1151px; top: 699px; width: 250px; height: 250px; border: 1px solid #ccc; border-radius: 4px; background: #fff; }
.extents { width: 248px; height: 248px; }
.draw { position: absolute; left: 4px; top: 4px; width: 69px; height: 34px; display: flex; border: 1px solid #ccc; border-radius: 4px; background: #fff; }
.draw span { flex: 1; display: flex; align-items: center; justify-content: center; }
.draw span:first-child { flex: none; width: 43px; border-right: 1px solid #ccc; }
.draw svg { width: 14px; height: 14px; }
.go-map { position: absolute; right: 4px; top: 4px; width: 40px; height: 34px; }
.go-map svg { width: 14px; height: 14px; }
.tab { position: absolute; right: 0; top: 129px; width: 34px; height: 77px; display: flex; align-items: center; gap: 5px; padding-top: 8px; writing-mode: vertical-rl; transform: rotate(180deg); background: #337ab7; color: #fff; font-weight: bold; border-radius: 0 4px 4px 0; }
.tab svg { width: 12px; height: 12px; transform: rotate(180deg); }
.credit { position: absolute; left: 4px; bottom: 4px; width: 171px; height: 26px; border: 1px solid #ccc; background: #fff; color: #000; font: 10px/24px "DejaVu Sans", sans-serif; text-align: center; white-space: nowrap; }
.credit a { color: #1e66e8; }
```
